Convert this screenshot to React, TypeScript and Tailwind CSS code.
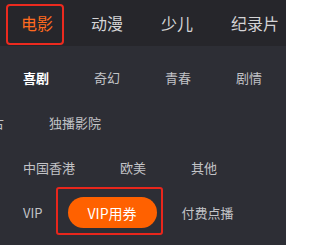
import React from "react";

const font = { fontFamily: '"Noto Sans CJK SC", "Noto Sans", sans-serif' };

function Item({ children, active }: { children: React.ReactNode; active?: boolean }) {
  return (
    <div
      className={
        "px-5 text-[13px] leading-none whitespace-nowrap " +
        (active ? "text-white font-bold" : "text-[#c2c3c7]")
      }
    >
      {children}
    </div>
  );
}

export default function App() {
  return (
    <div
      className="w-[286px] h-[245px] overflow-hidden bg-[#2d2e35] flex flex-col"
      style={font}
    >
      {/* top nav */}
      <div className="h-[46px] bg-[#26262b] flex items-center shrink-0 pl-[21px] gap-[38px] text-[16px] leading-none whitespace-nowrap">
        <div className="relative text-[#ff6a1f]">
          电影
          <span className="absolute -left-[15px] -right-[11px] -top-[11px] -bottom-[14px] border-2 border-[#ec2a1f] rounded-[4px]" />
        </div>
        <div className="text-[#d4d4d6]">动漫</div>
        <div className="text-[#d4d4d6]">少儿</div>
        <div className="text-[#d4d4d6]">纪录片</div>
      </div>

      <div className="pt-[9px] flex flex-col">
        <div className="h-[45px] flex items-center pl-[3px] gap-[5px]">
          <Item active>喜剧</Item>
          <Item>奇幻</Item>
          <Item>青春</Item>
          <Item>剧情</Item>
        </div>
        <div className="h-[45px] flex items-center -ml-[42px] gap-[5px]">
          <Item>复古</Item>
          <Item>独播影院</Item>
        </div>
        <div className="h-[45px] flex items-center pl-[3px] gap-[5px]">
          <Item>中国香港</Item>
          <Item>欧美</Item>
          <Item>其他</Item>
        </div>
        <div className="h-[45px] flex items-center pl-[3px] gap-[5px]">
          <Item>VIP</Item>
          <div className="relative h-[31px] px-5 rounded-full bg-[#ff6100] text-white text-[14px] leading-none flex items-center whitespace-nowrap">
            VIP用券
            <span className="absolute -left-[12px] -right-[6px] -top-[10px] -bottom-[7px] border-2 border-[#e8261c] rounded-[3px]" />
          </div>
          <Item>付费点播</Item>
        </div>
      </div>
    </div>
  );
}
